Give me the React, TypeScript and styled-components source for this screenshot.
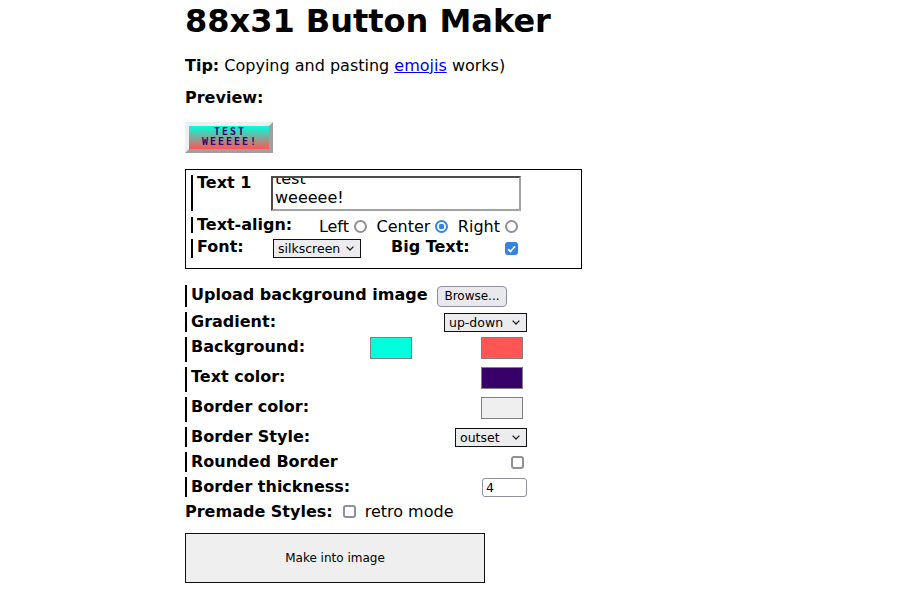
import React, { useLayoutEffect, useRef } from "react";
import styled, { createGlobalStyle } from "styled-components";

const Global = createGlobalStyle`
  html, body { margin: 0; padding: 0; background: #fff; }
  body {
    font-family: "DejaVu Sans", "Liberation Sans", sans-serif;
    font-size: 16px;
    color: #000;
  }
  * { box-sizing: border-box; }
`;

const Page = styled.main`
  width: 544px;
  margin: 0 auto;
  padding-top: 2px;
`;

const Title = styled.h1`
  margin: 0;
  font-size: 32px;
  font-weight: bold;
  line-height: normal;
`;

const Para = styled.p<{ $top: number }>`
  margin: ${(p) => p.$top}px 0 0;
  line-height: normal;
`;

const Link = styled.a`
  color: #0000ee;
  text-decoration: underline;
`;

const Badge = styled.div`
  margin-top: 14.4px;
  width: 88px;
  height: 31px;
  border: 4px solid;
  border-color: #efefef #a0a0a0 #a0a0a0 #efefef;
  background: linear-gradient(to bottom, #00ffdd, #ff5555);
  display: flex;
  flex-direction: column;
  align-items: center;
  justify-content: center;
  padding-left: 2px;
  font-family: "DejaVu Sans Mono", monospace;
  font-weight: bold;
  font-size: 10px;
  line-height: 10px;
  letter-spacing: 2px;
  text-transform: uppercase;
  color: #380066;
`;

const Panel = styled.section`
  margin-top: 16px;
  width: 397px;
  border: 1px solid #000;
  padding: 5px 0 10px 5px;
  display: flex;
  flex-direction: column;
  gap: 6px;
`;

const PanelRow = styled.div<{ $h: number }>`
  display: grid;
  grid-template-columns: 74px 250px;
  align-items: start;
  height: ${(p) => p.$h}px;
  border-left: 2px solid #000;
  padding-left: 4px;
`;

const PanelLabel = styled.span`
  font-weight: bold;
  line-height: 15px;
  white-space: nowrap;
`;

const TextBox = styled.textarea`
  display: block;
  width: 250px;
  height: 35px;
  margin: 1px 0 0;
  padding: 2px;
  border: 2px solid;
  border-color: #4d4d4d #a3a3a3 #a3a3a3 #4d4d4d;
  font-family: "DejaVu Sans", sans-serif;
  font-size: 16px;
  line-height: normal;
  color: #000;
  background: #fff;
  overflow: hidden;
  resize: none;
  outline: none;
`;

const RadioGroup = styled.div`
  display: flex;
  justify-content: flex-end;
  align-items: flex-start;
  gap: 6.5px;
  line-height: normal;
  white-space: nowrap;
`;

const Option = styled.label`
  display: flex;
  align-items: flex-start;
`;

const Radio = styled.span<{ $on?: boolean }>`
  display: block;
  width: 13px;
  height: 13px;
  margin: 3px 3px 0 5px;
  border-radius: 50%;
  border: 2px solid ${(p) => (p.$on ? "#3584e4" : "#8f8f9d")};
  background: ${(p) =>
    p.$on
      ? "radial-gradient(circle, #3584e4 0 2.6px, #fff 3.1px)"
      : "#fff"};
`;

const FontControls = styled.div`
  display: grid;
  grid-template-columns: 120px 1fr auto;
  align-items: start;
`;

const SelectWrap = styled.span<{ $w: number; $ml?: number; $col?: string }>`
  position: relative;
  display: block;
  width: ${(p) => p.$w}px;
  height: 19px;
  margin: ${(p) => (p.$col ? "1px 0 0 0" : `0 0 0 ${p.$ml ?? 0}px`)};
  grid-column: ${(p) => p.$col ?? "auto"};
  justify-self: ${(p) => (p.$col ? "end" : "start")};
`;

const Select = styled.select`
  appearance: none;
  -webkit-appearance: none;
  display: block;
  width: 100%;
  height: 100%;
  margin: 0;
  padding: 0 0 0 4px;
  border: 1px solid #111;
  border-radius: 0;
  background: #ececef;
  font-family: "DejaVu Sans", sans-serif;
  font-size: 12.5px;
  color: #000;
  outline: none;
`;

const ChevronSlot = styled.span`
  position: absolute;
  right: 7px;
  top: 7px;
  display: flex;
  pointer-events: none;
`;

const Box = styled.span<{ $on?: boolean; $m: string; $col?: string }>`
  display: flex;
  align-items: center;
  justify-content: center;
  width: 13px;
  height: 13px;
  margin: ${(p) => p.$m};
  grid-column: ${(p) => p.$col ?? "auto"};
  justify-self: end;
  border-radius: 3px;
  border: ${(p) => (p.$on ? "none" : "2px solid #8f8f9d")};
  background: ${(p) => (p.$on ? "#3584e4" : "#fff")};
  flex: none;
`;

const Settings = styled.div`
  margin-top: 16px;
  display: flex;
  flex-direction: column;
  gap: 5px;
`;

const SettingRow = styled.div<{ $h: number }>`
  display: grid;
  grid-template-columns: 177px 113px 46px;
  align-items: start;
  width: 342px;
  height: ${(p) => p.$h}px;
  border-left: 2px solid #000;
  padding-left: 4px;
`;

const SettingLabel = styled.span`
  grid-column: 1;
  font-weight: bold;
  line-height: normal;
  white-space: nowrap;
`;

const BrowseButton = styled.button`
  grid-column: 2 / 4;
  justify-self: end;
  width: 70px;
  height: 21px;
  margin: 1px 20px 0 0;
  padding: 0;
  border: 1px solid #8f8f9d;
  border-radius: 4px;
  background: #e9e9ed;
  font-family: "DejaVu Sans", sans-serif;
  font-size: 12px;
  color: #000;
`;

const Swatch = styled.span<{ $color: string; $col: number }>`
  display: block;
  grid-column: ${(p) => p.$col};
  width: 42px;
  height: 22px;
  margin-left: ${(p) => (p.$col === 2 ? 2 : 0)}px;
  border: 1px solid #808080;
  background: ${(p) => p.$color};
`;

const NumberField = styled.input`
  grid-column: 3;
  justify-self: end;
  width: 45px;
  height: 19px;
  margin: 1px 0 0;
  padding: 0 0 0 3px;
  border: 1px solid #8f8f9d;
  border-radius: 3px;
  background: #fff;
  font-family: "DejaVu Sans", sans-serif;
  font-size: 12.5px;
  color: #000;
  outline: none;
`;

const Premade = styled.div`
  margin-top: 5px;
  display: flex;
  align-items: center;
  line-height: normal;
`;

const Strong = styled.b`
  font-weight: bold;
`;

const MakeButton = styled.button`
  display: block;
  margin-top: 12.4px;
  width: 300px;
  height: 50px;
  padding: 0;
  border: 1px solid #111;
  border-radius: 0;
  background: #efefef;
  font-family: "DejaVu Sans", sans-serif;
  font-size: 12px;
  color: #000;
`;

const Chevron = () => (
  <svg width="8" height="5" viewBox="0 0 8 5">
    <path d="M0.6 0.6 L4 4 L7.4 0.6" fill="none" stroke="#222" strokeWidth="1.3" />
  </svg>
);

const Check = () => (
  <svg width="9" height="8" viewBox="0 0 9 8">
    <path d="M1 4.2 L3.4 6.5 L8 1.4" fill="none" stroke="#fff" strokeWidth="1.6" />
  </svg>
);

const Dropdown = ({ value, w, ml, col }: { value: string; w: number; ml?: number; col?: string }) => (
  <SelectWrap $w={w} $ml={ml} $col={col}>
    <Select defaultValue={value}>
      <option value={value}>{value}</option>
    </Select>
    <ChevronSlot>
      <Chevron />
    </ChevronSlot>
  </SelectWrap>
);

export default function App() {
  const ref = useRef<HTMLTextAreaElement>(null);
  useLayoutEffect(() => {
    if (ref.current) ref.current.scrollTop = ref.current.scrollHeight;
  }, []);

  return (
    <Page>
      <Global />
      <Title>88x31 Button Maker</Title>
      <Para $top={15.75}>
        <Strong>Tip:</Strong> Copying and pasting <Link href="#">emojis</Link> works)
      </Para>
      <Para $top={13.4}>
        <Strong>Preview:</Strong>
      </Para>
      <Badge>
        <span>test</span>
        <span>weeeee!</span>
      </Badge>

      <Panel>
        <PanelRow $h={36}>
          <PanelLabel>Text 1</PanelLabel>
          <TextBox ref={ref} defaultValue={"test\nweeeee!"} spellCheck={false} />
        </PanelRow>
        <PanelRow $h={16}>
          <PanelLabel>Text-align:</PanelLabel>
          <RadioGroup>
            <Option>
              Left<Radio />
            </Option>
            <Option>
              Center<Radio $on />
            </Option>
            <Option>
              Right<Radio />
            </Option>
          </RadioGroup>
        </PanelRow>
        <PanelRow $h={19}>
          <PanelLabel>Font:</PanelLabel>
          <FontControls>
            <Dropdown value="silkscreen" w={88} ml={2} />
            <PanelLabel>Big Text:</PanelLabel>
            <Box $on $m="3.5px 3px 0 4px">
              <Check />
            </Box>
          </FontControls>
        </PanelRow>
      </Panel>

      <Settings>
        <SettingRow $h={22}>
          <SettingLabel>Upload background image</SettingLabel>
          <BrowseButton>Browse...</BrowseButton>
        </SettingRow>
        <SettingRow $h={20}>
          <SettingLabel>Gradient:</SettingLabel>
          <Dropdown value="up-down" w={83} col="2 / 4" />
        </SettingRow>
        <SettingRow $h={25}>
          <SettingLabel>Background:</SettingLabel>
          <Swatch $color="#00ffdd" $col={2} />
          <Swatch $color="#ff5555" $col={3} />
        </SettingRow>
        <SettingRow $h={25}>
          <SettingLabel>Text color:</SettingLabel>
          <Swatch $color="#380069" $col={3} />
        </SettingRow>
        <SettingRow $h={25}>
          <SettingLabel>Border color:</SettingLabel>
          <Swatch $color="#efefef" $col={3} />
        </SettingRow>
        <SettingRow $h={20}>
          <SettingLabel>Border Style:</SettingLabel>
          <Dropdown value="outset" w={72} col="2 / 4" />
        </SettingRow>
        <SettingRow $h={20}>
          <SettingLabel>Rounded Border</SettingLabel>
          <Box $m="4px 3px 0 0" $col="3" />
        </SettingRow>
        <SettingRow $h={20}>
          <SettingLabel>Border thickness:</SettingLabel>
          <NumberField type="text" defaultValue="4" />
        </SettingRow>
      </Settings>

      <Premade>
        <Strong>Premade Styles:</Strong>
        <Box $m="1px 9px 0 10px" />
        <span>retro mode</span>
      </Premade>

      <MakeButton>Make into image</MakeButton>
    </Page>
  );
}
